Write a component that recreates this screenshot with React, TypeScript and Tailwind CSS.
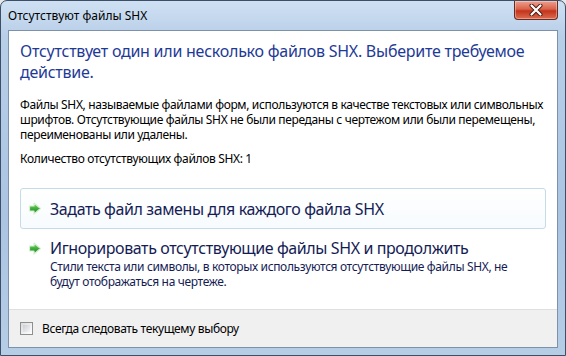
import React from 'react';

const font = { fontFamily: '"Noto Sans", "Open Sans", sans-serif' };

function GreenArrow() {
  return (
    <svg width="14" height="13" viewBox="0 0 14 13" className="shrink-0">
      <defs>
        <linearGradient id="ga" x1="0" y1="0" x2="0" y2="1">
          <stop offset="0" stopColor="#8be06f" />
          <stop offset="0.5" stopColor="#3fae3a" />
          <stop offset="1" stopColor="#1b7f28" />
        </linearGradient>
      </defs>
      <path
        d="M1.5 4 H6 V1 L12.5 6.5 L6 12 V9 H1.5 Z"
        fill="url(#ga)"
        stroke="#d9eed3"
        strokeWidth="1.2"
        strokeLinejoin="round"
      />
    </svg>
  );
}

function CloseButton() {
  return (
    <div className="w-[44px] h-[19px] rounded-b-[4px] border border-t-0 border-[#6b2a20] bg-[linear-gradient(#eea090,#d9634a_45%,#c4331b_55%,#dc6c50)] flex items-center justify-center shadow-[inset_0_0_0_1px_rgba(255,255,255,0.35)]">
      <svg width="14" height="12" viewBox="0 0 14 12">
        <path d="M2.5 1.5 L11.5 10.5 M11.5 1.5 L2.5 10.5" stroke="#4a1a12" strokeWidth="4" strokeLinecap="round" />
        <path d="M2.5 1.5 L11.5 10.5 M11.5 1.5 L2.5 10.5" stroke="#ffffff" strokeWidth="2.2" strokeLinecap="round" />
      </svg>
    </div>
  );
}

export default function App() {
  return (
    <div className="w-[566px] h-[356px] bg-[#e8e8e8] overflow-hidden" style={font}>
      <div className="w-full h-full flex flex-col rounded-t-[7px] border border-[#3d4f66] bg-[linear-gradient(180deg,#cfe0f3_0%,#b8cfe8_10%,#aac4e2_60%,#b6cde6_100%)]">
        <div className="h-[29px] flex items-start justify-between pl-[7px] pr-[7px]">
          <span className="text-[12px] leading-none text-black mt-[9px]">Отсутствуют файлы SHX</span>
          <CloseButton />
        </div>
        <div className="flex-1 mx-[7px] mb-[7px] border border-[#7d91ab] bg-white flex flex-col">
          <div className="flex-1 flex flex-col pl-[11px] pr-[10px] pt-[10px]">
            <div className="text-[16px] leading-[21px] text-[#1e3a96] whitespace-nowrap tracking-[-0.25px]">
              Отсутствует один или несколько файлов SHX. Выберите требуемое
              <br />
              действие.
            </div>
            <div className="mt-[14px] text-[12px] leading-[15px] text-black whitespace-nowrap tracking-[-0.35px]">
              Файлы SHX, называемые файлами форм, используются в качестве текстовых или символьных
              <br />
              шрифтов. Отсутствующие файлы SHX не были переданы с чертежом или были перемещены,
              <br />
              переименованы или удалены.
            </div>
            <div className="mt-[9px] text-[12px] leading-[15px] text-black tracking-[-0.35px]">
              Количество отсутствующих файлов SHX: 1
            </div>
            <div className="mt-[22px] h-[41px] mr-[1px] rounded-[3px] border border-[#c6dbe8] bg-[linear-gradient(#ffffff,#f7fbfd)] flex items-center pl-[7px] gap-[8px]">
              <GreenArrow />
              <span className="text-[16px] leading-none text-[#151c55] tracking-[-0.4px]">
                Задать файл замены для каждого файла SHX
              </span>
            </div>
            <div className="mt-[8px] flex items-start pl-[8px] gap-[8px]">
              <div className="pt-[5px]">
                <GreenArrow />
              </div>
              <div className="flex flex-col">
                <span className="text-[16px] leading-[22px] text-[#151c55] tracking-[-0.4px]">
                  Игнорировать отсутствующие файлы SHX и продолжить
                </span>
                <span className="text-[12px] leading-[15px] text-[#151c55] whitespace-nowrap tracking-[-0.35px]">
                  Стили текста или символы, в которых используются отсутствующие файлы SHX, не
                  <br />
                  будут отображаться на чертеже.
                </span>
              </div>
            </div>
          </div>
          <div className="h-[38px] border-t border-[#dfdfdf] bg-[#f0f0f0] flex items-center pl-[11px] gap-[9px]">
            <div className="w-[13px] h-[13px] border border-[#8e8f8f] bg-[linear-gradient(135deg,#dcdcdc,#ffffff)] p-[2px]">
              <div className="w-full h-full bg-[linear-gradient(135deg,#cbcfd5,#f3f4f6)]" />
            </div>
            <span className="text-[12px] text-black tracking-[-0.35px]">Всегда следовать текущему выбору</span>
          </div>
        </div>
      </div>
    </div>
  );
}
